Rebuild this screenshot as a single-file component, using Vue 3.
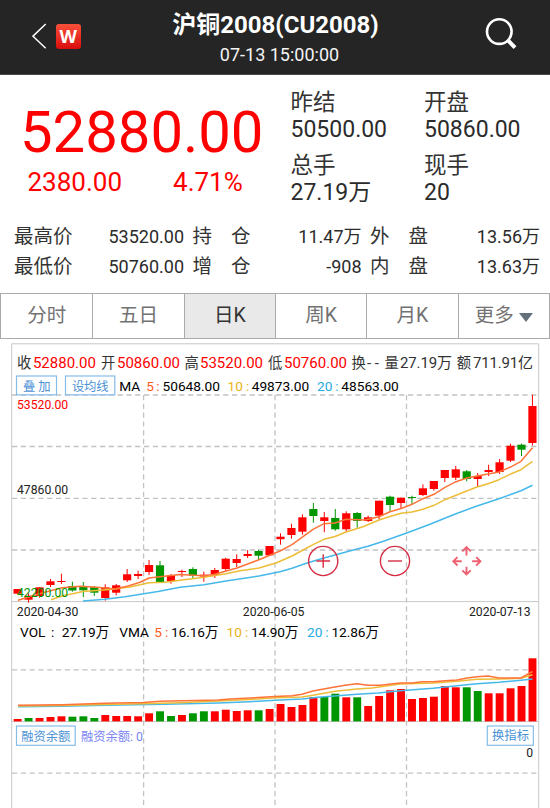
<script setup>
const summary = [
  { label: '昨结', value: '50500.00' },
  { label: '开盘', value: '50860.00' },
  { label: '总手', value: '27.19万' },
  { label: '现手', value: '20' },
]

const details = [
  { label: '最高价', value: '53520.00' },
  { label: '持仓', value: '11.47万' },
  { label: '外盘', value: '13.56万' },
  { label: '最低价', value: '50760.00' },
  { label: '增仓', value: '-908' },
  { label: '内盘', value: '13.63万' },
]

const tabs = ['分时', '五日', '日K', '周K', '月K', '更多']

// [direction, high, body top, body bottom, low] in chart units
const candles = [
  ['r', 589, 589, 593.7, 593.7], ['r', 593.3, 595.7, 599.7, 602.7], ['r', 587.3, 587.3, 596, 597.7],
  ['r', 579, 581.3, 585, 587], ['r', 573.7, 581, 582, 584], ['g', 581.7, 586, 590.5, 591.7],
  ['g', 582, 586, 590.3, 597], ['g', 586, 587, 592.7, 596], ['r', 584.3, 587.3, 598, 600.7],
  ['r', 584, 585.3, 592.7, 595.3], ['r', 569, 574.3, 580.3, 582], ['r', 570.7, 574, 576, 579],
  ['r', 560, 565, 572, 575], ['g', 561, 565.3, 582.3, 582.3], ['r', 574, 575.3, 581.3, 583.7],
  ['r', 569.7, 571, 572, 577], ['g', 567.3, 569, 575.7, 578.7], ['r', 571.7, 574.7, 576.5, 581.7],
  ['r', 568, 570, 574.7, 578], ['r', 557.7, 558.7, 569, 571.7], ['r', 554.3, 559, 563, 567],
  ['r', 550, 554, 556, 558], ['g', 549.7, 551, 555.7, 560], ['r', 546, 546, 555.3, 555.3],
  ['r', 533.3, 536.7, 539.2, 544.7], ['r', 523.7, 528, 535, 538.7], ['r', 514.3, 517.3, 531.7, 534.7],
  ['g', 503, 509, 516, 522.7], ['r', 512, 517.3, 521, 532.3], ['g', 509, 518, 529.3, 530.7],
  ['r', 511.3, 513.3, 529.3, 532], ['g', 512, 513, 521, 527.7], ['r', 515.7, 517.3, 521, 522],
  ['r', 500.7, 500.7, 515.7, 519.3], ['g', 495.7, 496.7, 505, 511.3], ['r', 497.7, 497.7, 503, 508.7],
  ['g', 495.7, 497, 498, 504.3], ['r', 484.3, 488.3, 495, 496], ['r', 481, 481, 489, 490.7],
  ['r', 470, 470, 478, 482], ['r', 466, 469.3, 477.7, 480], ['g', 470, 471.3, 479, 481.3],
  ['r', 473, 476, 479, 487], ['r', 464.7, 470, 472, 476], ['r', 459, 462.3, 472, 474],
  ['r', 443.7, 445.7, 460.7, 462], ['g', 443.7, 444.7, 449.7, 456], ['r', 394.7, 406, 443, 445.5],
]

const volumeTops = [
  719, 718, 718, 717, 716.3, 716.7, 716.3, 718, 715, 716, 716, 716.3,
  713.3, 711.3, 716, 715, 713.3, 711.3, 711.3, 709.7, 711, 710.3, 710.3, 709,
  704, 707, 705, 697, 697, 693.7, 697.3, 697.3, 706, 696, 690.3, 689,
  699, 698, 696.7, 686, 687.3, 687.3, 691, 693.3, 693.3, 688.3, 686, 658.3,
]
const fallingVolumes = new Set([1, 5, 6, 7, 13, 14, 16, 17, 22, 28, 29, 31, 41, 42])

const xAt = (i) => 17.6 + i * 10.954
const colorOf = (d) => (d === 'g' ? '#009600' : '#ff0000')

const averages = [
  { color: '#46b8ea', points: '83,601 105,599.3 125,596.7 158,591.5 180,587.3 204,584.7 226,581 259,576 280,571.7 292,568.3 307,563 324,558 357,549 368,546.3 382,541.7 406,533.3 430,524.3 441,519.7 456,513.7 477,506 499,498.7 512,494 521,490.7 532.5,485.3' },
  { color: '#edbd38', points: '51,599.7 62,596 83,591.5 110,589.5 130,587 149,582.7 165,582.3 180,580.3 204,577.3 226,573.7 240,570.7 259,568 276,563 292,556 303,550 313,544.7 324,539.3 335,536.5 346,532 363,526.7 379,520 390,516.5 401,513.3 412,512 423,509.3 434,505.3 445,499.7 466,491.3 477,487 488,483.7 499,479.7 510,474.3 521,469.7 532.5,461.3' },
  { color: '#ff7438', points: '18,600.3 33,595.7 43,592.7 62,587.7 80,586.3 97,587.3 115,589 128,586 140,582.3 149,578 160,576.7 180,574.5 204,575.7 215,574.3 226,571 237,568 259,559.7 280,551 292,544.7 313,529.3 324,523.7 335,523 346,519.3 365,520 379,516.7 390,511.7 402,508.3 412,504.3 423,498.7 434,494.3 445,487.3 456,481.7 467,478 477,476 488,474 499,472 510,467.3 521,461.3 532.5,447.7' },
  { color: '#46b8ea', points: '18,706.7 62,706.3 105,705.3 165,704.3 218,703 250,701.7 275,700.3 302,699 318,697.3 357,694.3 378,693 400,690.7 433,688.3 457,685.7 477,683.7 499,682.3 521,680.3 532.5,679' },
  { color: '#edbd38', points: '18,706 62,705.5 105,704.5 143,703.7 180,702.7 218,701 250,699.5 275,697.7 302,697 313,695.3 335,691.3 357,689 372,688 400,684 433,683 457,681.3 477,679.3 499,679 521,678.3 532.5,674.7' },
  { color: '#ff7438', points: '18,705.3 62,704.7 105,703.3 143,702.5 160,701.3 218,700 230,699 250,698 275,696.5 292,695.7 302,694.3 313,691 325,688.7 345,685.3 357,683.7 368,685.3 380,685.3 400,683 412,683 422,681.7 433,681.7 445,680.7 457,680 467,678 477,676.7 488,676 499,678 521,678 532.5,671.5' },
]

const rowLines = [395, 446.5, 498.3, 550, 669.9, 773.2]
const columnLines = [143.6, 275, 406.5]
</script>

<template>
  <main class="page">
    <header class="topbar">
      <div class="nav">
        <svg class="back" width="15" height="26" viewBox="0 0 15 26"><path d="M13.7 1 1 13.2l12.7 12.1" /></svg>
        <span class="logo">W</span>
      </div>
      <div class="heading">
        <h1>沪铜2008(CU2008)</h1>
        <time>07-13 15:00:00</time>
      </div>
      <svg class="search" width="34" height="34" viewBox="0 0 34 34">
        <circle cx="15.3" cy="14.6" r="12.3" />
        <path d="m24 23.3 7 7.3" />
      </svg>
    </header>

    <section class="quote">
      <div class="last">
        <strong>52880.00</strong>
        <div class="change"><span>2380.00</span><span>4.71%</span></div>
      </div>
      <dl class="summary">
        <div v-for="s in summary" :key="s.label"><dt>{{ s.label }}</dt><dd>{{ s.value }}</dd></div>
      </dl>
    </section>

    <dl class="details">
      <div v-for="d in details" :key="d.label">
        <dt><span v-for="c in d.label" :key="c">{{ c }}</span></dt><dd>{{ d.value }}</dd>
      </div>
    </dl>

    <nav class="tabs">
      <button v-for="t in tabs" :key="t" :class="{ active: t === '日K' }">
        {{ t }}<i v-if="t === '更多'" class="caret"></i>
      </button>
    </nav>

    <svg class="chart" width="550" height="469" viewBox="0 339 550 469">
      <path class="frame" d="M11.7 808V343.8H538.7V808M11.7 601.6H538.7M11.7 721.6H538.7" />
      <g class="grid">
        <line v-for="y in rowLines" :key="y" x1="12" x2="538" :y1="y" :y2="y" />
        <line v-for="x in columnLines" :key="x" y1="395" y2="808" :x1="x" :x2="x" />
      </g>

      <g class="info">
        <text y="368" x="17">收</text><text class="up" y="368" x="32.9" textLength="63">52880.00</text>
        <text y="368" x="101">开</text><text class="up" y="368" x="117" textLength="63">50860.00</text>
        <text y="368" x="184.5">高</text><text class="up" y="368" x="200" textLength="63">53520.00</text>
        <text y="368" x="268">低</text><text class="up" y="368" x="284" textLength="63">50760.00</text>
        <text y="368" x="351.5">换</text><text class="num" y="368" x="367" textLength="12">--</text>
        <text y="368" x="384.6">量</text><text class="num" y="368" x="400" textLength="52">27.19万</text>
        <text y="368" x="456.8">额</text><text class="num" y="368" x="473" textLength="60">711.91亿</text>
      </g>

      <g class="legend">
        <text x="119.3" y="391">MA</text>
        <text class="ma5" x="146.3" y="391">5</text><text class="ma5" x="156.3" y="391">:</text><text x="162.5" y="391" textLength="57.5">50648.00</text>
        <text class="ma10" x="227.5" y="391">10</text><text class="ma10" x="246" y="391">:</text><text x="251.7" y="391" textLength="57.5">49873.00</text>
        <text class="ma20" x="317" y="391">20</text><text class="ma20" x="335.3" y="391">:</text><text x="341.3" y="391" textLength="57.5">48563.00</text>
        <text x="20" y="637">VOL</text><text x="51" y="637">:</text><text x="61.8" y="637" textLength="47.5">27.19万</text>
        <text x="119.3" y="637">VMA</text>
        <text class="ma5" x="154.3" y="637">5</text><text class="ma5" x="165" y="637">:</text><text x="171" y="637" textLength="47.5">16.16万</text>
        <text class="ma10" x="226.5" y="637">10</text><text class="ma10" x="245" y="637">:</text><text x="251" y="637" textLength="47.5">14.90万</text>
        <text class="ma20" x="307" y="637">20</text><text class="ma20" x="325.3" y="637">:</text><text x="331.5" y="637" textLength="47.5">12.86万</text>
      </g>

      <g class="chip">
        <rect x="16.5" y="376" width="40" height="18.8" /><text x="23" y="391.3" textLength="27.5">叠 加</text>
        <rect x="65.5" y="376" width="49.3" height="18.8" /><text x="72" y="391.3" textLength="36.5">设均线</text>
        <rect x="16.5" y="726" width="58.7" height="19.3" /><text x="21.3" y="741.3" textLength="49">融资余额</text>
        <rect x="487.3" y="726" width="46" height="19.3" /><text x="492" y="740.3" textLength="37">换指标</text>
      </g>
      <text class="balance" x="81" y="741" textLength="62">融资余额: 0</text>
      <text class="axis" x="526.3" y="757">0</text>

      <g v-for="(c, i) in candles" :key="'c' + i" :fill="colorOf(c[0])">
        <rect :x="xAt(i) - 0.5" :y="c[1]" width="1" :height="c[4] - c[1]" />
        <rect :x="xAt(i) - 4.1" :y="c[2]" width="8.2" :height="c[3] - c[2]" />
      </g>
      <rect
        v-for="(y, i) in volumeTops" :key="'v' + i" :x="xAt(i) - 3.9" :y="y" width="7.9" :height="721.4 - y"
        :fill="colorOf(fallingVolumes.has(i) ? 'g' : 'r')"
      />
      <polyline v-for="(a, i) in averages" :key="'a' + i" class="average" :points="a.points" :stroke="a.color" />

      <g class="axis">
        <text class="up" x="17" y="408.8">53520.00</text>
        <text x="17" y="493.5">47860.00</text>
        <text class="down" x="17" y="596.5">42200.00</text>
        <text x="16.8" y="615.5">2020-04-30</text>
        <text x="242.8" y="615.5">2020-06-05</text>
        <text x="469" y="615.5">2020-07-13</text>
      </g>

      <g class="zoomer">
        <circle cx="323.2" cy="561" r="14.6" /><path d="M316.3 561h13.8M323.2 554.2v13.6" />
        <circle cx="395" cy="561" r="14.6" /><path d="M388 561h14" />
      </g>
      <path
        class="move"
        d="M466.5 555.5v-8M462.3 551.3l4.2-4.2 4.2 4.2M466.5 566.7v7.6M462.3 570.3l4.2 4.2 4.2-4.2M461.7 561.3h-8M457.5 557.1l-4.2 4.2 4.2 4.2M472.2 561.3h8M476.2 557.1l4.2 4.2-4.2 4.2"
      />
    </svg>
  </main>
</template>

<style>
body { background: #fff; }
</style>

<style scoped>
.page {
  width: 550px;
  height: 808px;
  overflow: hidden;
  background: #fff;
  color: #333;
  font-family: Roboto, "Noto Sans CJK SC", sans-serif;
}
.topbar {
  display: grid;
  grid-template-columns: 130px 1fr 130px;
  height: 75px;
  box-sizing: border-box;
  background: #252525;
  border-bottom: 1px solid #4a4a4a;
  color: #fff;
}
.nav {
  display: flex;
  align-items: center;
  gap: 8.5px;
  height: 73px;
  padding-left: 32px;
}
.back { fill: none; stroke: #fff; stroke-width: 1.5; margin-top: -2px; }
.logo {
  width: 25.5px;
  height: 25.5px;
  border-radius: 3px;
  background: linear-gradient(#f9503a, #d90d0d);
  font: bold 18px/25px "Open Sans", sans-serif;
  text-align: center;
}
.heading { padding-left: 1px; text-align: center; }
h1 {
  margin: 9px 0 0;
  font-size: 24px;
  font-weight: 700;
  line-height: 32px;
  white-space: nowrap;
}
.heading time { display: block; padding-left: 8px; font-size: 18px; line-height: 27px; color: #f4f4f4; }
.search {
  justify-self: end;
  margin: 17px 32px 0 0;
  fill: none;
  stroke: #fff;
  stroke-width: 2.6;
}
.search path { stroke-width: 4; }

.quote { display: grid; grid-template-columns: 290.5px 1fr; height: 146px; }
.last { padding: 26px 0 0 20px; color: #f00; }
.last strong { display: block; font-size: 58px; font-weight: 400; line-height: 62px; }
.change { display: flex; gap: 51px; padding: 4px 0 0 7.5px; font-size: 26px; line-height: 31px; }
dl, dd { margin: 0; }
.summary {
  display: grid;
  grid-template-columns: 133.5px 1fr;
  align-content: start;
  row-gap: 8px;
  padding-top: 14px;
  font-size: 23px;
  line-height: 27px;
}
.summary dt { font-size: 22.5px; }
.summary dd { line-height: 28px; color: #2b2b2b; }

.details {
  display: grid;
  grid-template-columns: 170px 169px 170px;
  column-gap: 8.5px;
  height: 72px;
  padding-left: 14px;
  align-content: start;
}
.details div { display: flex; justify-content: space-between; height: 30px; line-height: 31px; }
.details dt { display: flex; justify-content: space-between; width: 58px; font-size: 19.5px; }
.details dd { font-size: 18px; color: #2b2b2b; }

.tabs {
  display: grid;
  grid-template-columns: repeat(6, 1fr);
  height: 46px;
  box-sizing: border-box;
  border: 1px solid #aaa;
}
.tabs button {
  display: flex;
  align-items: center;
  justify-content: center;
  gap: 5px;
  padding: 0;
  border: 0;
  border-left: 1px solid #aaa;
  background: #fff;
  color: #727272;
  font: 19.5px/28px Roboto, "Noto Sans CJK SC", sans-serif;
}
.tabs button:first-child { border-left: 0; }
.tabs .active { background: #e9e9e9; color: #333; }
.caret {
  margin-top: 2px;
  border: 7.5px solid transparent;
  border-top: 9px solid #64717d;
  border-bottom: 0;
}

.chart { display: block; }
.frame { fill: none; stroke: #c8c8c8; stroke-width: 1; }
.grid line { stroke: #c2c2c2; stroke-width: 1.3; stroke-dasharray: 5.2 3.6; }
.info { font-size: 14.3px; fill: #333; }
.info .up, .info .num { font-size: 15px; }
.up, .info .up { fill: #f00; }
.down { fill: #009600; }
.legend { font-size: 13.7px; fill: #000; }
.ma5 { fill: #ff5a1a; }
.ma10 { fill: #e9b320; }
.ma20 { fill: #29abe2; }
.chip rect { fill: #fff; stroke: #86bce8; stroke-width: 1.2; }
.chip text { font-size: 12.3px; fill: #4a92d4; }
.balance { font-size: 12.3px; fill: #7a84f5; }
.axis { font-size: 12.2px; fill: #222; }
.axis .up { fill: #f00; }
.axis .down { fill: #009600; }
.average { fill: none; stroke-width: 1.5; stroke-linejoin: round; }
.zoomer { fill: none; stroke: #d62f45; stroke-width: 1.4; }
.move { fill: none; stroke: #f06070; stroke-width: 1.9; }
</style>
